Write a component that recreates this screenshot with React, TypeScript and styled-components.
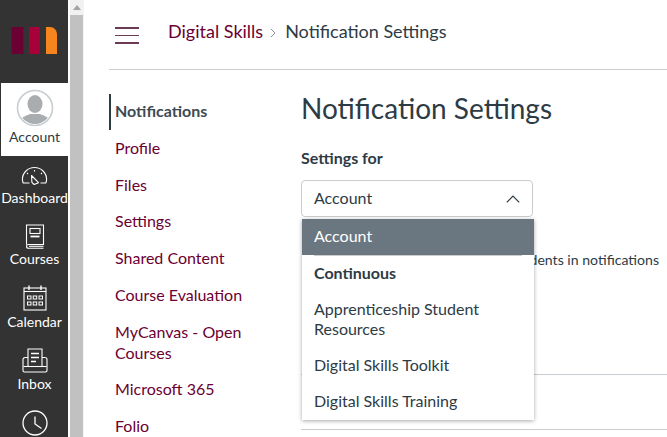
import React from "react";
import styled, { createGlobalStyle } from "styled-components";

const Global = createGlobalStyle`
  html, body { margin: 0; padding: 0; height: 100%; overflow: hidden; background: #fff; }
  body { font-family: Lato, "Liberation Sans", sans-serif; color: #2d3b45; }
  #root { height: 100%; }
`;

const Page = styled.div`
  display: flex;
  width: 667px;
  height: 437px;
  overflow: hidden;
`;

const GlobalNav = styled.nav`
  width: 68px;
  flex: none;
  height: 437px;
  background: #333333;
  display: flex;
  flex-direction: column;
  align-items: stretch;
  overflow: hidden;
`;

const LogoLink = styled.div`
  height: 83px;
  flex: none;
  display: flex;
  align-items: flex-start;
  justify-content: center;
  padding-top: 27px;
  box-sizing: border-box;
`;

const NavItem = styled.div<{ $active?: boolean; $height: number; $top: number }>`
  height: ${(p) => p.$height}px;
  flex: none;
  box-sizing: border-box;
  padding-top: ${(p) => p.$top}px;
  margin-left: 1px;
  display: flex;
  flex-direction: column;
  align-items: center;
  background: ${(p) => (p.$active ? "#fff" : "transparent")};
  color: ${(p) => (p.$active ? "#2d3b45" : "#fff")};
  svg { display: block; flex: none; }
`;

const NavLabel = styled.span<{ $gap: number }>`
  margin-top: ${(p) => p.$gap}px;
  font-size: 14px;
  line-height: 16px;
  white-space: nowrap;
`;

const Scrollbar = styled.div`
  width: 13px;
  flex: none;
  margin-left: 2px;
  background: #f1f1f1;
  display: flex;
  flex-direction: column;
  align-items: center;
`;

const ScrollArrow = styled.div`
  height: 15px;
  flex: none;
  display: flex;
  align-items: center;
  justify-content: center;
  width: 100%;
`;

const ScrollThumb = styled.div`
  flex: 1;
  width: 100%;
  background: #c1c1c1;
`;

const Main = styled.div`
  flex: 1;
  min-width: 0;
  padding-left: 25px;
  display: flex;
  flex-direction: column;
  border-left: 1px solid #f4f4f4;
`;

const Header = styled.header`
  height: 70px;
  flex: none;
  box-sizing: border-box;
  border-bottom: 1px solid #c7cdd1;
  display: flex;
  align-items: flex-start;
  padding: 21px 0 0 6px;
`;

const Hamburger = styled.div`
  width: 24px;
  height: 16.5px;
  margin-top: 6px;
  display: flex;
  flex-direction: column;
  justify-content: space-between;
  span { display: block; height: 1.5px; background: #6b3a55; }
`;

const Crumbs = styled.div`
  margin-left: 29px;
  display: flex;
  align-items: center;
  font-size: 18px;
  line-height: 21px;
  span.link { color: #6b0033; }
  span.cur { color: #2d3b45; }
`;

const CrumbSep = styled.svg`
  margin: 2px 9px 0 7px;
`;

const Body = styled.div`
  display: flex;
  flex: 1;
  min-height: 0;
`;

const SideMenu = styled.ul`
  width: 192px;
  flex: none;
  list-style: none;
  margin: 0;
  padding: 24px 0 0;
`;

const MenuItem = styled.li<{ $active?: boolean }>`
  box-sizing: border-box;
  margin-bottom: 15.75px;
  padding-left: ${(p) => (p.$active ? 4 : 6)}px;
  border-left: ${(p) => (p.$active ? "2px solid #2d3b45" : "none")};
  font-size: 16px;
  line-height: 21px;
  width: 150px;
  color: ${(p) => (p.$active ? "#3d4a54" : "#6b0033")};
  font-weight: ${(p) => (p.$active ? 700 : 400)};
  ${(p) => p.$active && "padding-top: 6px; padding-bottom: 9px; margin-bottom: 6.8px;"}
`;

const Content = styled.div`
  flex: 1;
  min-width: 0;
  position: relative;
`;

const Title = styled.h1`
  margin: 21px 0 0;
  font-weight: 400;
  font-size: 28px;
  line-height: 34px;
  color: #2d3b45;
  white-space: nowrap;
`;

const FieldLabel = styled.div`
  margin-top: 24px;
  font-size: 16px;
  line-height: 18px;
  font-weight: 700;
`;

const SelectBox = styled.div`
  position: relative;
  margin-top: 13px;
  width: 232px;
  height: 37px;
  box-sizing: border-box;
  border: 1px solid #c7cdd1;
  border-radius: 4px;
  display: flex;
  align-items: center;
  justify-content: space-between;
  padding: 0 12px 2px;
  font-size: 16px;
  color: #2d3b45;
`;

const ChevronSvg = styled.svg`
  margin-top: 3px;
`;

const Dropdown = styled.div`
  position: absolute;
  left: 0;
  top: 38px;
  width: 232px;
  background: #fff;
  box-shadow: 0 1px 4px rgba(0, 0, 0, 0.35);
  z-index: 2;
  font-size: 16px;
  line-height: 20px;
`;

const Option = styled.div<{ $selected?: boolean; $group?: boolean }>`
  padding: 7px 12px 9px;
  background: ${(p) => (p.$selected ? "#6b7780" : "transparent")};
  color: ${(p) => (p.$selected ? "#fff" : "#2d3b45")};
  font-weight: ${(p) => (p.$group ? 700 : 400)};
`;

const OptionRule = styled.div`
  height: 1px;
  margin: 0 12px;
  background: #c7cdd1;
`;

const HintRow = styled.div`
  margin-top: 34px;
  font-size: 14.1px;
  line-height: 18px;
  white-space: nowrap;
  text-align: right;
  padding-right: 8px;
`;

const Divider = styled.div<{ $gap: number }>`
  margin-top: ${(p) => p.$gap}px;
  height: 1px;
  background: #c7cdd1;
`;

const Logo = () => (
  <svg width="46" height="27" viewBox="0 0 46 27">
    <rect x="0.6" y="0" width="11.6" height="27" fill="#6b0033" />
    <rect x="18" y="0" width="11" height="27" fill="#a80038" />
    <path d="M35 0h4c4 0 7 3 7 8v19H35z" fill="#f7851d" />
  </svg>
);

const Avatar = () => (
  <svg width="38" height="38" viewBox="0 0 38 38">
    <defs>
      <clipPath id="av"><circle cx="19" cy="19" r="16" /></clipPath>
    </defs>
    <circle cx="19" cy="19" r="17.5" fill="#fff" stroke="#c7cdd1" strokeWidth="1.6" />
    <g clipPath="url(#av)" fill="#a9adb0">
      <ellipse cx="19" cy="15" rx="7.5" ry="9" />
      <path d="M3 36c0-8 7-9 11-11h10c4 2 11 3 11 11v3H3z" />
    </g>
  </svg>
);

const DashIcon = () => (
  <svg width="27" height="19" viewBox="0 0 27 19" fill="none" stroke="#fff" strokeWidth="1.1">
    <path d="M8.5 17H2.2C1.6 15.5 1.4 14.5 1.4 13.5 1.4 6.8 6.8 1.5 13.5 1.5s12.1 5.3 12.1 12c0 1-.2 2-.8 3.5H19.5" />
    <path d="M10.5 9.5l7 7.2-4.4 1.8-2.2-2.2z" strokeLinejoin="round" />
    <path d="M13.5 4v1.5M6 7l1 1M21 7l-1 1" />
  </svg>
);

const BookIcon = () => (
  <svg width="20" height="25" viewBox="0 0 20 25" fill="none" stroke="#fff" strokeWidth="1.1">
    <path d="M1.5 20.5V1h17v19.5H3.5C2.4 20.5 1.5 21.3 1.5 22.3s.9 2 2 2h15" />
    <rect x="5" y="4.5" width="10" height="5" />
    <path d="M5.5 12.5h9" strokeWidth="1.8" />
    <path d="M4 22.3h14.5" />
  </svg>
);

const CalIcon = () => (
  <svg width="24" height="26" viewBox="0 0 24 26" fill="none" stroke="#fff" strokeWidth="1.1">
    <rect x="1" y="3" width="22" height="22" />
    <path d="M6 .5V5M18 .5V5" strokeWidth="1.4" />
    <path d="M1 6.5h22" />
    <g strokeWidth="1">
      <rect x="4.5" y="11" width="3.5" height="3" />
      <rect x="10.2" y="11" width="3.5" height="3" />
      <rect x="16" y="11" width="3.5" height="3" />
      <rect x="4.5" y="17" width="3.5" height="3" />
      <rect x="10.2" y="17" width="3.5" height="3" />
      <rect x="16" y="17" width="3.5" height="3" />
    </g>
  </svg>
);

const InboxIcon = () => (
  <svg width="26" height="25" viewBox="0 0 26 25" fill="none" stroke="#fff" strokeWidth="1.1">
    <path d="M6 18V1h14v17" />
    <path d="M6 9.5H3.2C1.9 9.5 1 10.5 1 11.5v11c0 .9.5 1.5 1.4 1.5h21.2c.9 0 1.4-.6 1.4-1.5v-11c0-1-.9-2-2.2-2H20" />
    <path d="M1.5 18.5h23" />
    <path d="M9 5.5h8M9 9.5h8M9 13.5h5" strokeWidth="1.5" />
  </svg>
);

const ClockIcon = () => (
  <svg width="26" height="26" viewBox="0 0 26 26" fill="none" stroke="#fff" strokeWidth="1.3">
    <circle cx="13" cy="13" r="12" />
    <path d="M13 6.5v7.5l6.5 4.5" />
  </svg>
);

const Chevron = () => (
  <ChevronSvg width="14" height="8" viewBox="0 0 14 8" fill="none" stroke="#2d3b45" strokeWidth="1.2">
    <path d="M.8 7.4 7 1l6.2 6.4" />
  </ChevronSvg>
);

export default function App() {
  const items = [
    "Profile",
    "Files",
    "Settings",
    "Shared Content",
    "Course Evaluation",
    "MyCanvas - Open Courses",
    "Microsoft 365",
    "Folio",
  ];
  return (
    <Page>
      <Global />
      <GlobalNav>
        <LogoLink><Logo /></LogoLink>
        <NavItem $active $height={73} $top={6}><Avatar /><NavLabel $gap={2}>Account</NavLabel></NavItem>
        <NavItem $height={62} $top={10}><DashIcon /><NavLabel $gap={5}>Dashboard</NavLabel></NavItem>
        <NavItem $height={62} $top={6}><BookIcon /><NavLabel $gap={2}>Courses</NavLabel></NavItem>
        <NavItem $height={62} $top={5}><CalIcon /><NavLabel $gap={3}>Calendar</NavLabel></NavItem>
        <NavItem $height={62} $top={6}><InboxIcon /><NavLabel $gap={3}>Inbox</NavLabel></NavItem>
        <NavItem $height={33} $top={6}><ClockIcon /></NavItem>
      </GlobalNav>
      <Scrollbar>
        <ScrollArrow>
          <svg width="8" height="5" viewBox="0 0 8 5"><path d="M4 0l4 5H0z" fill="#a3a3a3" /></svg>
        </ScrollArrow>
        <ScrollThumb />
      </Scrollbar>
      <Main>
        <Header>
          <Hamburger><span /><span /><span /></Hamburger>
          <Crumbs>
            <span className="link">Digital Skills</span>
            <CrumbSep width="6" height="10" viewBox="0 0 6 10" fill="none" stroke="#8b969e" strokeWidth="1">
              <path d="M1 1l4 4-4 4" />
            </CrumbSep>
            <span className="cur">Notification Settings</span>
          </Crumbs>
        </Header>
        <Body>
          <SideMenu>
            <MenuItem $active>Notifications</MenuItem>
            {items.map((t) => (
              <MenuItem key={t}>{t}</MenuItem>
            ))}
          </SideMenu>
          <Content>
            <Title>Notification Settings</Title>
            <FieldLabel>Settings for</FieldLabel>
            <SelectBox>
              Account
              <Chevron />
              <Dropdown>
                <Option $selected>Account</Option>
                <OptionRule />
                <Option $group>Continuous</Option>
                <Option>Apprenticeship Student Resources</Option>
                <Option>Digital Skills Toolkit</Option>
                <Option>Digital Skills Training</Option>
              </Dropdown>
            </SelectBox>
            <HintRow>Show names of students in notifications</HintRow>
            <Divider $gap={105} />
            <Divider $gap={54} />
          </Content>
        </Body>
      </Main>
    </Page>
  );
}
